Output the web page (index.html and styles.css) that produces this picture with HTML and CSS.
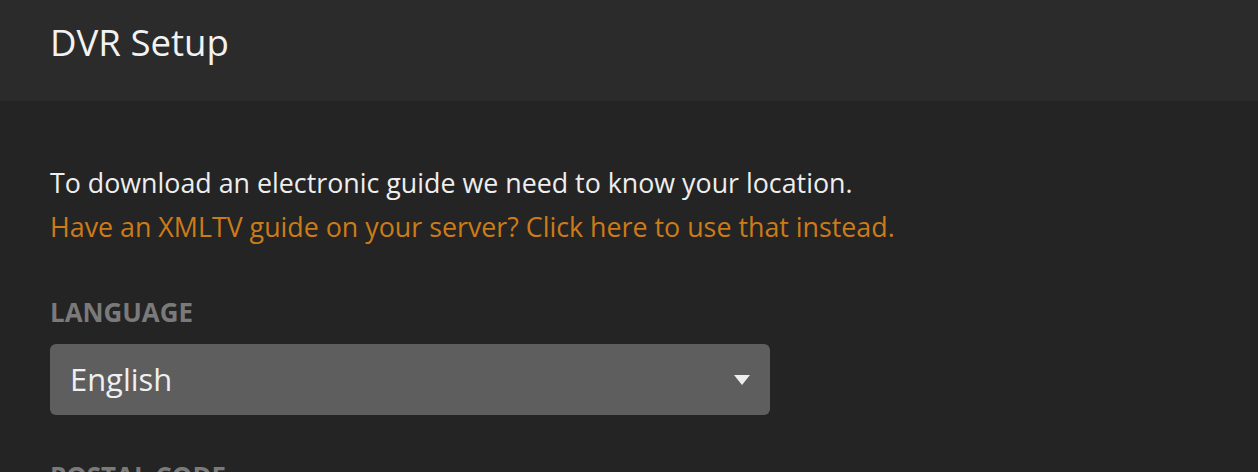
FILE: index.html
```html
<!DOCTYPE html>
<html>
<head>
<meta charset="utf-8">
<link rel="stylesheet" href="styles.css">
</head>
<body>
<header class="header"><h1 class="title">DVR Setup</h1></header>
<main class="content">
  <p class="intro">To download an electronic guide we need to know your location.</p>
  <a class="xmltv-link">Have an XMLTV guide on your server? Click here to use that instead.</a>
  <label class="field-label label-language">Language</label>
  <div class="select">
    <span class="select-value">English</span>
    <span class="select-arrow"></span>
  </div>
  <label class="field-label label-postal">Postal Code</label>
</main>
</body>
</html>
```
FILE: styles.css
```css
html, body {
  margin: 0;
  padding: 0;
  background: #242424;
  height: 100%;
  overflow: hidden;
}
body {
  font-family: "Open Sans", "Noto Sans", sans-serif;
  color: #eeeeee;
}
.header {
  background: #2b2b2b;
  height: 101px;
  box-sizing: border-box;
  padding: 18px 50px 0;
}
.title {
  margin: 0;
  font-size: 36.6px;
  line-height: 48px;
  font-weight: 400;
  color: #f2f2f2;
}
.content {
  display: flex;
  flex-direction: column;
  align-items: flex-start;
  padding: 60px 50px 0 50px;
}
.intro {
  margin: 0;
  font-size: 26.8px;
  line-height: 44px;
}
.xmltv-link {
  font-size: 26.8px;
  line-height: 44px;
  color: #cc7b19;
  cursor: pointer;
}
.field-label {
  display: block;
  font-size: 25.9px;
  line-height: 30px;
  font-weight: 700;
  text-transform: uppercase;
  color: #7a7a7a;
}
.label-language { margin-top: 48px; }
.label-postal { margin-top: 46px; }
.select {
  margin-top: 17px;
  width: 720px;
  height: 71px;
  box-sizing: border-box;
  background: #5e5e5e;
  border-radius: 6px;
  display: flex;
  align-items: center;
  justify-content: space-between;
  padding: 0 20px 0 20px;
}
.select-value {
  font-size: 30.9px;
  line-height: 71px;
  color: #f0f0f0;
}
.select-arrow {
  width: 0;
  height: 0;
  border-left: 8px solid transparent;
  border-right: 8px solid transparent;
  border-top: 10px solid #eeeeee;
}
```
